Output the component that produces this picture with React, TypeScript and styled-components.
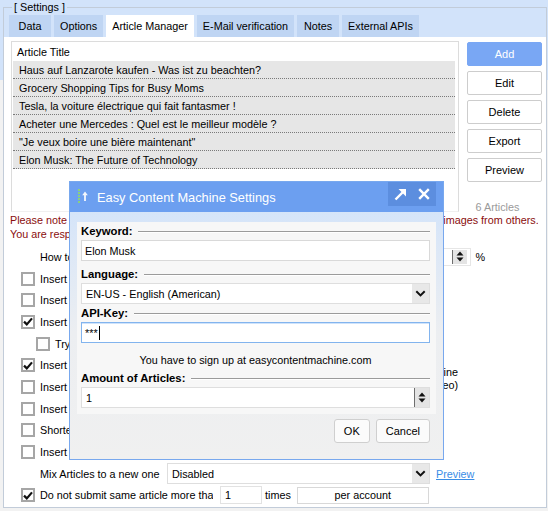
import React from "react";
import styled, { createGlobalStyle } from "styled-components";

const tabs = ["Data", "Options", "Article Manager", "E-Mail verification", "Notes", "External APIs"];

const articles = [
  "Haus auf Lanzarote kaufen - Was ist zu beachten?",
  "Grocery Shopping Tips for Busy Moms",
  "Tesla, la voiture électrique qui fait fantasmer !",
  "Acheter une Mercedes : Quel est le meilleur modèle ?",
  "\"Je veux boire une bière maintenant\"",
  "Elon Musk: The Future of Technology",
];

const sideButtons = ["Add", "Edit", "Delete", "Export", "Preview"];

function CheckIcon() {
  return (
    <svg width="10" height="9" viewBox="0 0 10 9">
      <path d="M1 4.6 L3.8 7.4 L9 1.4" fill="none" stroke="#111" strokeWidth="2.2" />
    </svg>
  );
}

function ChevronIcon() {
  return (
    <svg width="11" height="7" viewBox="0 0 11 7">
      <path d="M1.3 1.3 L5.5 5.4 L9.7 1.3" fill="none" stroke="#111" strokeWidth="2" />
    </svg>
  );
}

function SpinIcon() {
  return (
    <svg width="8" height="13" viewBox="0 0 8 13">
      <path d="M0.5 5.5 L4 1.5 L7.5 5.5 Z" fill="#111" />
      <path d="M0.5 7.5 L4 11.5 L7.5 7.5 Z" fill="#111" />
    </svg>
  );
}

function TitleIcon() {
  return (
    <svg width="16" height="18" viewBox="0 0 16 18">
      {[2, 5, 8, 11, 14].map((y) => (
        <circle key={y} cx="2" cy={y} r="1.1" fill="#93dc63" />
      ))}
      <path d="M8 13 V6" stroke="#f4f7fc" strokeWidth="1.8" />
      <path d="M5.2 7.2 L8 3.6 L10.8 7.2 Z" fill="#f4f7fc" />
    </svg>
  );
}

function MaximizeIcon() {
  return (
    <svg width="13" height="13" viewBox="0 0 13 13">
      <path d="M1.5 11.5 L9 4" stroke="#fff" strokeWidth="2.4" />
      <path d="M4.5 1 L12 1 L12 8.5 Z" fill="#fff" />
    </svg>
  );
}

function CloseIcon() {
  return (
    <svg width="12" height="12" viewBox="0 0 12 12">
      <path d="M1.2 1.2 L10.8 10.8 M10.8 1.2 L1.2 10.8" stroke="#fff" strokeWidth="2.4" />
    </svg>
  );
}

function Checkbox({ checked }: { checked?: boolean }) {
  return <Box>{checked ? <CheckIcon /> : null}</Box>;
}

export default function App() {
  return (
    <>
      <GlobalStyle />
      <Screen>
        <Settings>
          <Legend>[ Settings ]</Legend>
          <TabStrip>
            {tabs.map((t) => (
              <Tab key={t} $active={t === "Article Manager"}>
                {t}
              </Tab>
            ))}
          </TabStrip>

          <TabPage>
            <TopArea>
              <ArticleList>
                <ListHeader>Article Title</ListHeader>
                {articles.map((a) => (
                  <ListRow key={a}>{a}</ListRow>
                ))}
              </ArticleList>
              <ButtonColumn>
                {sideButtons.map((b) => (
                  <SideButton key={b} $primary={b === "Add"}>
                    {b}
                  </SideButton>
                ))}
                <Count>6 Articles</Count>
              </ButtonColumn>
            </TopArea>

            <Notice>
              <div>Please note that you are not permitted to publish any copyrighted articles, texts, videos, or images from others.</div>
              <div>You are responsible for all of the content you publish with this tool.</div>
            </Notice>

            <Options>
              <Row $indent={29}>
                <Label>How to spread the images over the article (in percent)</Label>
                <NumBox>
                  <SpinBox>
                    <SpinIcon />
                  </SpinBox>
                </NumBox>
                <Percent>%</Percent>
              </Row>
              <Row $indent={10}>
                <Checkbox />
                <Label>Insert images from Pixabay into the article</Label>
              </Row>
              <Row $indent={10}>
                <Checkbox />
                <Label>Insert images from Unsplash into the article</Label>
              </Row>
              <Row $indent={10}>
                <Checkbox checked />
                <Label>Insert images from Bing image search</Label>
              </Row>
              <Row $indent={25}>
                <Checkbox />
                <Label>Try to find images with a free licence only</Label>
              </Row>
              <Row $indent={10}>
                <Checkbox checked />
                <Label>Insert a YouTube video matching the keyword</Label>
              </Row>
              <Row $indent={10}>
                <Checkbox />
                <Label>Insert a table of contents</Label>
                <SideNote>
                  Link to the article online
                  <br />
                  Embed as media (video)
                </SideNote>
              </Row>
              <Row $indent={10}>
                <Checkbox />
                <Label>Insert a random quote</Label>
              </Row>
              <Row $indent={10}>
                <Checkbox />
                <Label>Shorten the article to max. words</Label>
              </Row>
              <Row $indent={10}>
                <Checkbox />
                <Label>Insert a summary at the end</Label>
              </Row>
              <Row $indent={29}>
                <MixLabel>Mix Articles to a new one</MixLabel>
                <Select $width={263}>
                  <SelectText>Disabled</SelectText>
                  <SideBox>
                    <ChevronIcon />
                  </SideBox>
                </Select>
                <LinkText>Preview</LinkText>
              </Row>
              <Row $indent={10}>
                <Checkbox checked />
                <ClippedLabel>Do not submit same article more than</ClippedLabel>
                <SmallInput>1</SmallInput>
                <Label>times</Label>
                <AccountBox>per account</AccountBox>
              </Row>
            </Options>
          </TabPage>
        </Settings>

        <Dialog>
          <TitleBar>
            <TitleIcon />
            <TitleText>Easy Content Machine Settings</TitleText>
            <ControlBox>
              <MaximizeIcon />
              <CloseIcon />
            </ControlBox>
          </TitleBar>
          <DialogBody>
            <Panel>
              <FieldLabel>Keyword:</FieldLabel>
              <Input>Elon Musk</Input>
              <FieldLabel>Language:</FieldLabel>
              <Select $width={349}>
                <SelectText>EN-US - English (American)</SelectText>
                <SideBox>
                  <ChevronIcon />
                </SideBox>
              </Select>
              <FieldLabel>API-Key:</FieldLabel>
              <Input $focused>
                ***
                <Caret />
              </Input>
              <Hint>You have to sign up at easycontentmachine.com</Hint>
              <FieldLabel>Amount of Articles:</FieldLabel>
              <Select $width={349}>
                <SelectText>1</SelectText>
                <SpinBox>
                  <SpinIcon />
                </SpinBox>
              </Select>
            </Panel>
            <Footer>
              <DialogButton>OK</DialogButton>
              <DialogButton>Cancel</DialogButton>
            </Footer>
          </DialogBody>
        </Dialog>
      </Screen>
    </>
  );
}

const GlobalStyle = createGlobalStyle`
  html, body {
    margin: 0;
    padding: 0;
  }
  body {
    width: 548px;
    height: 511px;
    overflow: hidden;
    background: linear-gradient(to bottom, #d2e3fa 0, #d2e3fa 80px, #f2f2f2 80px);
    font-family: "Liberation Sans", Arial, sans-serif;
    font-size: 10.8px;
    color: #000;
  }
`;

const Screen = styled.div`
  position: relative;
  width: 548px;
  height: 511px;
`;

const Settings = styled.fieldset`
  margin: 0 1px 0 3px;
  padding: 0;
  min-width: 0;
  border: 1px solid #c2ccd9;
`;

const Legend = styled.legend`
  margin-left: 8px;
  padding: 0 2px;
  line-height: 15px;
  color: #000;
`;

const TabStrip = styled.div`
  display: flex;
  gap: 3px;
  padding-left: 5px;
  height: 22px;
`;

const Tab = styled.div<{ $active: boolean }>`
  min-width: 42px;
  box-sizing: border-box;
  padding: 0 6px;
  display: flex;
  align-items: center;
  justify-content: center;
  white-space: nowrap;
  background: ${(p) => (p.$active ? "#ffffff" : "#bfd5f3")};
`;

const TabPage = styled.div`
  box-sizing: border-box;
  height: 470px;
  padding: 4px 4px 0 7px;
  background: #fff;
`;

const TopArea = styled.div`
  display: grid;
  grid-template-columns: 448px 75px;
  column-gap: 8px;
  height: 171px;
`;

const ArticleList = styled.div`
  box-sizing: border-box;
  border: 1px solid #dcdcdc;
  border-bottom-color: #f0f0f0;
  display: flex;
  flex-direction: column;
`;

const ListHeader = styled.div`
  height: 19px;
  display: flex;
  align-items: center;
  padding-left: 5px;
`;

const ListRow = styled.div`
  box-sizing: border-box;
  height: 18px;
  margin: 0 3px 0 1px;
  padding-left: 6px;
  display: flex;
  align-items: center;
  white-space: nowrap;
  background: #e6e6e6;
  border-bottom: 1px dotted #7a7a7a;
`;

const ButtonColumn = styled.div`
  display: flex;
  flex-direction: column;
  gap: 5px;
  padding-top: 1px;
`;

const SideButton = styled.div<{ $primary?: boolean }>`
  box-sizing: border-box;
  height: 24px;
  display: flex;
  align-items: center;
  justify-content: center;
  border-radius: 2px;
  font-size: 11px;
  color: ${(p) => (p.$primary ? "#fff" : "#000")};
  background: ${(p) => (p.$primary ? "#79a7f4" : "#fff")};
  border: 1px solid ${(p) => (p.$primary ? "#79a7f4" : "#cdcdcd")};
`;

const Count = styled.div`
  margin: auto 0 -2px;
  line-height: 14px;
  text-align: center;
  padding-right: 14px;
  color: #9a9a9a;
`;

const Notice = styled.div`
  margin: 1px 4px 0 -1px;
  line-height: 14px;
  color: #8a0d0d;
  white-space: nowrap;
  overflow: hidden;
`;

const Options = styled.div`
  margin-top: 5px;
`;

const Row = styled.div<{ $indent: number }>`
  height: 21.7px;
  display: flex;
  align-items: center;
  padding-left: ${(p) => p.$indent}px;
  white-space: nowrap;
`;

const Box = styled.span`
  box-sizing: border-box;
  width: 14px;
  height: 14px;
  margin-right: 5px;
  flex: none;
  border: 2px solid #a6a6a6;
  background: #fff;
  display: flex;
  align-items: center;
  justify-content: center;
`;

const Label = styled.span`
  white-space: nowrap;
`;

const NumBox = styled.div`
  box-sizing: border-box;
  margin-left: auto;
  width: 60px;
  height: 18px;
  border: 1px solid #e6e6e6;
  display: flex;
  justify-content: flex-end;
  padding: 1px 3px 1px 0;
`;

const SpinBox = styled.div`
  width: 15px;
  align-self: stretch;
  flex: none;
  box-sizing: border-box;
  border-left: 1px solid #6e6e6e;
  background: #e4e4e4;
  display: flex;
  align-items: center;
  justify-content: center;
`;

const Percent = styled.span`
  margin: 0 57px 0 4px;
`;

const SideNote = styled.div`
  margin: -15px 84px 0 auto;
  line-height: 13px;
  text-align: right;
`;

const MixLabel = styled.span`
  width: 127px;
  flex: none;
`;

const Select = styled.div<{ $width: number }>`
  box-sizing: border-box;
  width: ${(p) => p.$width}px;
  height: 21px;
  flex: none;
  border: 1px solid #dedede;
  background: #fff;
  display: flex;
  align-items: stretch;
`;

const SelectText = styled.span`
  flex: 1;
  display: flex;
  align-items: center;
  padding-left: 4px;
`;

const SideBox = styled.div`
  width: 17px;
  background: #e8e8e8;
  display: flex;
  align-items: center;
  justify-content: center;
`;

const LinkText = styled.span`
  margin-left: 6px;
  color: #3a8de6;
  text-decoration: underline;
`;

const ClippedLabel = styled.span`
  width: 173px;
  margin-right: 7px;
  overflow: hidden;
  flex: none;
`;

const SmallInput = styled.div`
  box-sizing: border-box;
  width: 42px;
  height: 18px;
  margin-right: 3px;
  padding-left: 4px;
  border: 1px solid #e2e2e2;
  display: flex;
  align-items: center;
`;

const AccountBox = styled.div`
  box-sizing: border-box;
  width: 132px;
  height: 17px;
  margin-left: 6px;
  border: 1px solid #d8d8d8;
  display: flex;
  align-items: center;
  justify-content: center;
`;

const Dialog = styled.div`
  position: absolute;
  left: 69px;
  top: 181px;
  width: 375px;
  height: 279px;
  box-sizing: border-box;
  border: 1px solid #78a8ee;
  display: flex;
  flex-direction: column;
  background: linear-gradient(to bottom, #cfe2fb 0, #dbe7f7 60px, #eceef1 150px, #f0f0f0 100%);
`;

const TitleBar = styled.div`
  height: 30px;
  flex: none;
  display: flex;
  align-items: center;
  padding-left: 7px;
  background: #6c9ff0;
`;

const TitleText = styled.span`
  margin-left: 4px;
  font-size: 12.8px;
  color: #fff;
  white-space: nowrap;
`;

const ControlBox = styled.div`
  align-self: flex-start;
  margin: 0 7px 0 auto;
  width: 48px;
  height: 24px;
  background: #5c8edf;
  display: flex;
  align-items: center;
  justify-content: space-around;
`;

const DialogBody = styled.div`
  flex: 1;
  padding: 10px 7px 0;
  display: flex;
  flex-direction: column;
`;

const Panel = styled.div`
  padding: 0 6px 6px 4px;
  background: #f7f7f7;
  display: flex;
  flex-direction: column;
`;

const FieldLabel = styled.div`
  height: 18px;
  display: flex;
  align-items: center;
  gap: 6px;
  font-weight: bold;
  font-size: 11.3px;

  &::after {
    content: "";
    flex: 1;
    height: 1px;
    background: #9b9b9b;
    box-shadow: 0 1px 0 #fff;
  }
`;

const Input = styled.div<{ $focused?: boolean }>`
  box-sizing: border-box;
  height: 21px;
  margin-bottom: 4px;
  padding-left: 3px;
  display: flex;
  align-items: center;
  background: #fff;
  border: 1px solid ${(p) => (p.$focused ? "#82b4ee" : "#d9d9d9")};
  box-shadow: ${(p) => (p.$focused ? "inset 0 1px 0 #cfe3fb" : "none")};
`;

const Caret = styled.span`
  width: 1px;
  height: 14px;
  margin-left: 1px;
  background: #000;
`;

const Hint = styled.div`
  margin-top: 4px;
  line-height: 18px;
  text-align: center;
`;

const Footer = styled.div`
  display: flex;
  justify-content: flex-end;
  gap: 6px;
  padding: 5px 6px 0 0;
`;

const DialogButton = styled.div`
  box-sizing: border-box;
  height: 24px;
  padding: 0 9px;
  display: flex;
  align-items: center;
  border: 1px solid #cfcfcf;
  border-radius: 3px;
  background: #fbfbfb;
  font-size: 11px;
`;
